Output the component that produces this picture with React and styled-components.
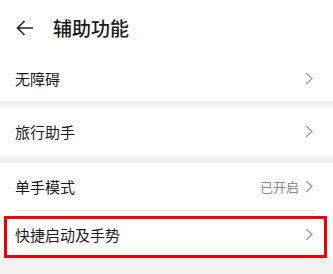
import styled, { createGlobalStyle } from "styled-components";

const Global = createGlobalStyle`
  html, body {
    margin: 0;
    padding: 0;
    background: #f2f2f2;
  }
  body {
    font-family: "Noto Sans CJK SC", "Noto Sans", sans-serif;
    color: #1b1b1b;
  }
`;

const Page = styled.div`
  width: 333px;
  height: 274px;
  overflow: hidden;
  background: #f2f2f2;
`;

const Header = styled.div`
  height: 55px;
  display: flex;
  align-items: center;
  padding-left: 16px;
  background: #fff;
`;

const Title = styled.h1`
  margin: 0 0 0 19px;
  font-size: 19px;
  font-weight: 500;
  line-height: 1;
  color: #1b1b1b;
`;

const Group = styled.div`
  background: #fff;
  margin-bottom: ${(p) => p.$gap || 0}px;
`;

const Row = styled.div`
  position: relative;
  height: ${(p) => p.$h || 47}px;
  display: flex;
  align-items: center;
  padding: 0 20px 0 15px;
  font-size: 15px;
`;

const Label = styled.span`
  flex: 1;
`;

const Value = styled.span`
  font-size: 13px;
  color: #8a8a8a;
  margin-right: 6px;
`;

const Divider = styled.div`
  height: 1px;
  margin: 0 17px 0 15px;
  background: #e6e6e6;
`;

const Highlight = styled.div`
  position: absolute;
  top: 5px;
  left: 4px;
  right: 6px;
  bottom: 0;
  border: 3px solid #f00000;
  pointer-events: none;
`;

const Chevron = () => (
  <svg width="8" height="13" viewBox="0 0 8 13">
    <polyline
      points="1,1 7,6.5 1,12"
      fill="none"
      stroke="#9a9a9a"
      strokeWidth="1.3"
    />
  </svg>
);

const BackArrow = () => (
  <svg width="18" height="16" viewBox="0 0 18 16">
    <path
      d="M17 8H1.5M8.5 1L1.5 8l7 7"
      fill="none"
      stroke="#222"
      strokeWidth="1.6"
    />
  </svg>
);

export default function App() {
  return (
    <>
      <Global />
      <Page>
        <Header>
          <BackArrow />
          <Title>辅助功能</Title>
        </Header>
        <Group $gap={7}>
          <Row $h={46}>
            <Label>无障碍</Label>
            <Chevron />
          </Row>
        </Group>
        <Group $gap={8}>
          <Row>
            <Label>旅行助手</Label>
            <Chevron />
          </Row>
        </Group>
        <Group>
          <Row>
            <Label>单手模式</Label>
            <Value>已开启</Value>
            <Chevron />
          </Row>
          <Divider />
          <Row>
            <Label>快捷启动及手势</Label>
            <Chevron />
            <Highlight />
          </Row>
        </Group>
      </Page>
    </>
  );
}
